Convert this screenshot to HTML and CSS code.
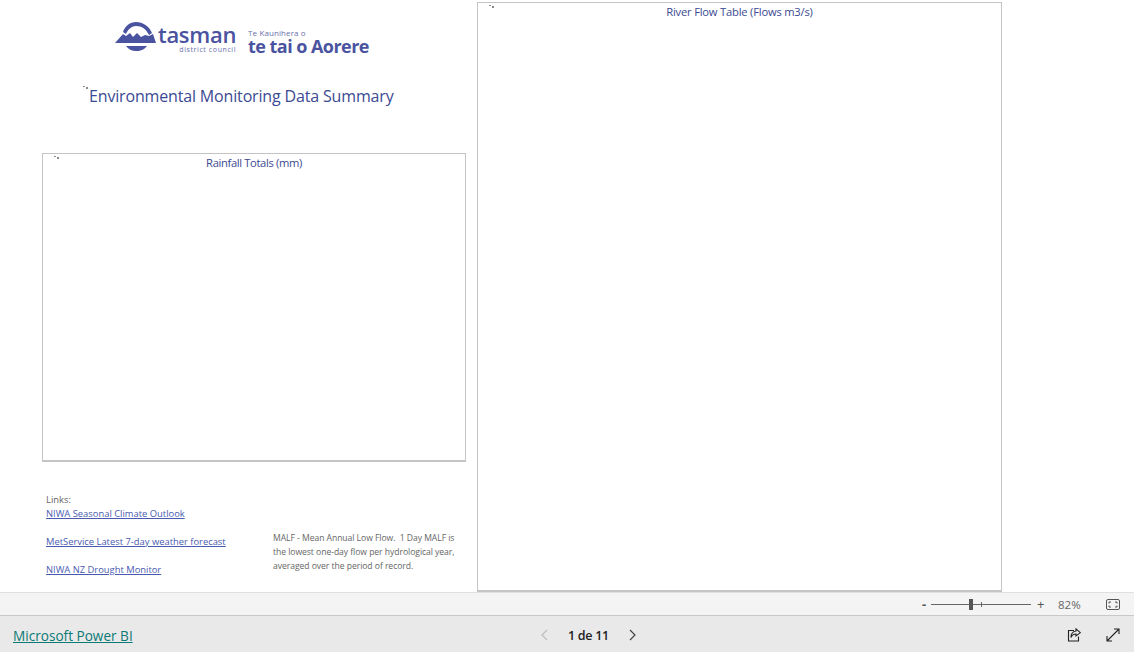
FILE: index.html
```html
<!DOCTYPE html>
<html lang="en">
<head>
    <meta charset="UTF-8">
    <title>Environmental Monitoring Data Summary</title>
    <link rel="stylesheet" href="styles.css">
</head>
<body>
    <div class="report">
        <div class="left-col">
            <div class="logo">
                <svg class="logo-mark" width="42" height="30" viewBox="0 0 42 30">
                    <path d="M8 10 C10 4 15 0 21 0 C28 0 34 4 37 11 L34 13 C31 7 27 4 21 4 C17 4 13 7 11 12 Z" fill="#4a539f"/>
                    <path d="M0 21 L8 12 L11 14 L15 11 L18 15 L22 11 L26 15 L30 13 L34 14 L38 12 L41 21 Z" fill="#4a539f"/>
                    <path d="M11 24 L32 24 C30 27 26 29 21 29 C17 29 13 27 11 24 Z" fill="#4a539f"/>
                </svg>
                <div class="logo-tasman">
                    <span class="logo-big">tasman</span>
                    <span class="logo-small">district council</span>
                </div>
                <div class="logo-maori">
                    <span class="logo-small left">Te Kaunihera o</span>
                    <span class="logo-big bold">te tai o Aorere</span>
                </div>
            </div>

            <h1 class="page-title">
                <svg class="tick" width="5" height="3" viewBox="0 0 5 3"><path d="M0 0 H2 V1 H0 Z M3 1 H5 V3 H3 Z" fill="#888"/></svg>
                Environmental Monitoring Data Summary
            </h1>

            <div class="visual rain-box">
                <svg class="tick" width="5" height="3" viewBox="0 0 5 3"><path d="M0 0 H2 V1 H0 Z M3 1 H5 V3 H3 Z" fill="#888"/></svg>
                <h2 class="visual-title rain-title">Rainfall Totals (mm)</h2>
            </div>

            <div class="notes">
                <div class="links">
                    <p>Links:</p>
                    <a href="#">NIWA Seasonal Climate Outlook</a>
                    <a href="#">MetService Latest 7-day weather forecast</a>
                    <a href="#">NIWA NZ Drought Monitor</a>
                </div>
                <p class="malf">MALF - Mean Annual Low Flow.&nbsp; 1 Day MALF is the lowest one-day flow per hydrological year, averaged over the period of record.</p>
            </div>
        </div>

        <div class="visual flow-box">
            <svg class="tick" width="5" height="3" viewBox="0 0 5 3"><path d="M0 0 H2 V1 H0 Z M3 1 H5 V3 H3 Z" fill="#888"/></svg>
            <h2 class="visual-title">River Flow Table (Flows m3/s)</h2>
        </div>
    </div>

    <div class="zoom-bar">
        <span class="zoom-minus">-</span>
        <div class="slider"><span class="slider-mid"></span><span class="slider-thumb"></span></div>
        <span class="zoom-plus">+</span>
        <span class="zoom-pct">82%</span>
        <svg class="fit-icon" width="14" height="11" viewBox="0 0 14 11" fill="none" stroke="#555">
            <rect x="0.5" y="0.5" width="13" height="10" rx="1.5"/>
            <path d="M3 4.5 V3 H5 M9 3 H11 V4.5 M11 6.5 V8 H9 M5 8 H3 V6.5"/>
        </svg>
    </div>

    <div class="footer">
        <a class="brand" href="#">Microsoft Power BI</a>
        <div class="pager">
            <svg width="8" height="12" viewBox="0 0 8 12" fill="none" stroke="#bdbdbd" stroke-width="1.2"><path d="M7 1 L2 6 L7 11"/></svg>
            <span class="pager-text">1 de 11</span>
            <svg width="8" height="12" viewBox="0 0 8 12" fill="none" stroke="#444" stroke-width="1.2"><path d="M1 1 L6 6 L1 11"/></svg>
        </div>
        <div class="footer-icons">
            <svg width="14" height="14" viewBox="0 0 14 14" fill="none" stroke="#222" stroke-width="1.1">
                <path d="M7 2.5 H1.5 V13 H11.5 V8.5"/>
                <path d="M9 0.8 L13.4 4.6 L9 8 V6 C7 6 5 7 4 9.5 C4 6 6 3.4 9 3 Z"/>
            </svg>
            <svg width="14" height="14" viewBox="0 0 14 14" fill="none" stroke="#222" stroke-width="1.1">
                <path d="M1 13 L13 1 M8 1 H13 V6 M1 8 V13 H6"/>
            </svg>
        </div>
    </div>
</body>
</html>
```
FILE: styles.css
```css
* {
    box-sizing: border-box;
}

body {
    font-family: "Open Sans", "Noto Sans", sans-serif;
    margin: 0;
    height: 652px;
    overflow: hidden;
    background: #fff;
    display: flex;
    flex-direction: column;
}

.report {
    height: 592px;
    display: flex;
    gap: 11px;
    padding: 2px 0 0 42px;
}

.left-col {
    width: 424px;
    display: flex;
    flex-direction: column;
}

.logo {
    display: flex;
    align-items: flex-start;
    margin: 18px 0 0 73px;
    color: #4a539f;
    height: 40px;
    flex-shrink: 0;
}

.logo-mark {
    margin-top: 2px;
}

.logo-tasman {
    display: flex;
    flex-direction: column;
    align-items: flex-end;
    margin: 4px 0 0 1px;
    padding-right: 12px;
}

.logo-big {
    font-size: 22px;
    line-height: 21px;
    font-weight: 600;
    letter-spacing: -0.3px;
}

.logo-big.bold {
    font-size: 18px;
    line-height: 18px;
    font-weight: 700;
    letter-spacing: -0.55px;
}

.logo-small {
    font-size: 7px;
    line-height: 9px;
    color: #6a70ac;
    letter-spacing: 0.6px;
}

.logo-small.left {
    font-size: 8px;
    line-height: 8px;
    margin-top: 9px;
    letter-spacing: 0.1px;
}

.logo-maori {
    display: flex;
    flex-direction: column;
}

.page-title {
    font-size: 16px;
    font-weight: 400;
    color: #3b4a92;
    margin: 24px 0 0 47px;
    line-height: 24px;
    white-space: nowrap;
    letter-spacing: -0.16px;
    position: relative;
    flex-shrink: 0;
}

.page-title .tick {
    position: absolute;
    left: -6px;
    top: 2px;
}

.visual {
    border: 1px solid #c4c4c4;
    position: relative;
}

.visual .tick {
    position: absolute;
    left: 11px;
    top: 2px;
}

.visual-title {
    font-size: 11.2px;
    font-weight: 400;
    color: #3b4a92;
    text-align: center;
    margin: 1px 0 0;
    line-height: 15px;
    letter-spacing: -0.2px;
}

.rain-title {
    letter-spacing: -0.35px;
}

.rain-box {
    height: 309px;
    margin-top: 45px;
    border-bottom-width: 2px;
    flex-shrink: 0;
}

.flow-box {
    width: 525px;
    height: 590px;
    border-bottom-width: 2px;
}

.notes {
    display: flex;
    padding: 31px 0 0 4px;
}

.links {
    width: 227px;
    font-size: 9.4px;
    line-height: 14px;
    color: #666;
}

.links p {
    margin: 0;
}

.links a {
    display: block;
    color: #4a5ab0;
    margin-bottom: 14px;
}

.malf {
    width: 190px;
    margin: 38px 0 0;
    font-size: 8.6px;
    line-height: 14px;
    color: #666;
    letter-spacing: -0.05px;
}

.zoom-bar {
    height: 24px;
    background: #f4f4f4;
    border-top: 1px solid #e0e0e0;
    border-bottom: 1px solid #c8c8c8;
    display: flex;
    align-items: center;
    padding-left: 922px;
    color: #555;
}

.zoom-minus {
    width: 9px;
    font-size: 13px;
    font-weight: 700;
}

.slider {
    width: 100px;
    height: 1px;
    background: #666;
    position: relative;
}

.slider-mid {
    position: absolute;
    left: 50px;
    top: -2px;
    width: 1px;
    height: 5px;
    background: #666;
}

.slider-thumb {
    position: absolute;
    left: 38px;
    top: -5px;
    width: 4px;
    height: 11px;
    background: #555;
}

.zoom-plus {
    font-size: 13px;
    margin-left: 6px;
    width: 21px;
}

.zoom-pct {
    font-size: 11.5px;
    width: 48px;
    color: #666;
}

.fit-icon {
    display: block;
}

.footer {
    height: 36px;
    background: #e9e9e9;
    display: flex;
    align-items: center;
    position: relative;
    padding: 2px 14px 0 13px;
}

.brand {
    color: #0b7a75;
    font-size: 13.6px;
}

.pager {
    position: absolute;
    left: 540px;
    display: flex;
    align-items: center;
    gap: 20px;
}

.pager-text {
    font-size: 12.5px;
    font-weight: 600;
    color: #222;
    letter-spacing: -0.3px;
}

.footer-icons {
    margin-left: auto;
    display: flex;
    gap: 25px;
}
```
